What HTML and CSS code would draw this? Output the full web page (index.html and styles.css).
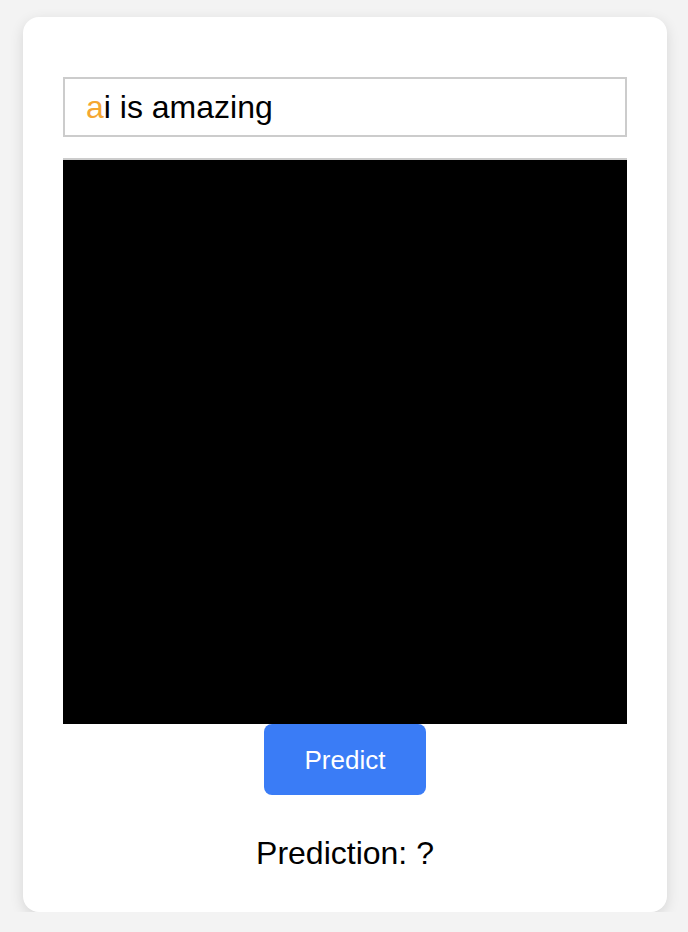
FILE: index.html
```html
<!DOCTYPE html>
<html lang="en">
<head>
<meta charset="utf-8">
<title>Predict</title>
<link rel="stylesheet" href="styles.css">
</head>
<body>
  <main class="card">
    <div class="text-input"><span class="accent">a</span>i is amazing</div>
    <div class="canvas"></div>
    <button class="predict-btn" type="button">Predict</button>
    <p class="prediction">Prediction: ?</p>
  </main>
</body>
</html>
```

FILE: styles.css
```css
html, body {
  margin: 0;
  padding: 0;
}

body {
  background: #f3f3f3;
  font-family: "Liberation Sans", Arial, sans-serif;
  color: #000;
  padding-top: 17px;
}

.card {
  box-sizing: border-box;
  width: 644px;
  margin-left: 23px;
  background: #fff;
  border-radius: 16px;
  box-shadow: 0 4px 14px rgba(0, 0, 0, 0.12);
  padding: 60px 40px 41px;
  display: flex;
  flex-direction: column;
  align-items: center;
}

.text-input {
  box-sizing: border-box;
  width: 564px;
  height: 60px;
  border: 2px solid #cccccc;
  padding: 0 21px;
  font-size: 32px;
  display: flex;
  align-items: center;
  white-space: pre;
  margin-bottom: 21px;
}

.accent {
  color: #f5a732;
}

.canvas {
  width: 564px;
  height: 564px;
  background: #000;
  border-top: 2px solid #cccccc;
}

.predict-btn {
  font-family: "Liberation Sans", Arial, sans-serif;
  font-size: 26px;
  color: #fff;
  background: #3a7cf6;
  border: none;
  border-radius: 8px;
  padding: 0 41px;
  height: 71px;
  line-height: 30px;
  cursor: pointer;
}

.prediction {
  font-size: 32px;
  margin: 40px 0 0;
  line-height: 36px;
}
```
